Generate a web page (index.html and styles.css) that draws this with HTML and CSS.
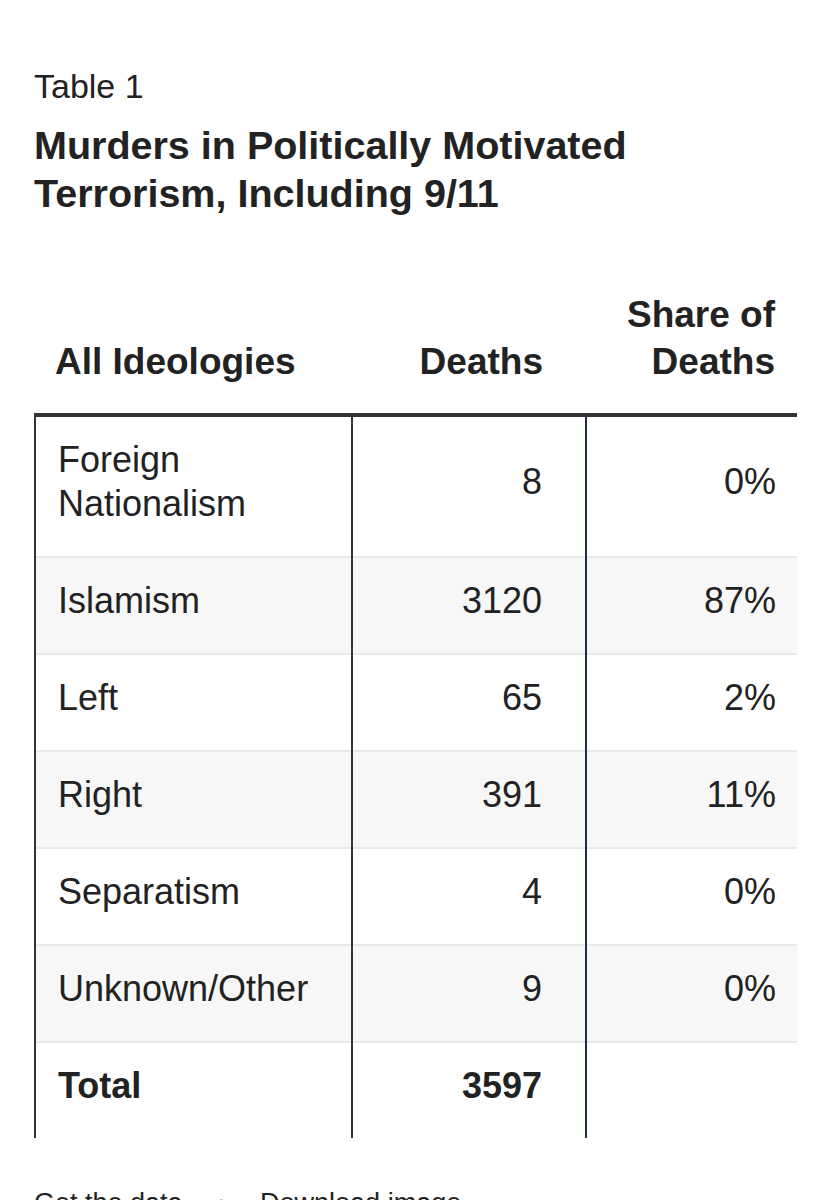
FILE: index.html
```html
<!DOCTYPE html>
<html lang="en">
<head>
<meta charset="utf-8">
<title>Table 1 — Murders in Politically Motivated Terrorism, Including 9/11</title>
<link rel="stylesheet" href="styles.css">
</head>
<body>
<div class="figure">
  <p class="label">Table 1</p>
  <h1 class="title">Murders in Politically Motivated Terrorism, Including 9/11</h1>
  <table class="data">
    <colgroup>
      <col class="col-name">
      <col class="col-deaths">
      <col class="col-share">
    </colgroup>
    <thead>
      <tr>
        <th class="c-name">All Ideologies</th>
        <th class="c-deaths">Deaths</th>
        <th class="c-share">Share of<br>Deaths</th>
      </tr>
    </thead>
    <tbody>
      <tr>
        <td class="c-name">Foreign<br>Nationalism</td>
        <td class="c-deaths">8</td>
        <td class="c-share">0%</td>
      </tr>
      <tr class="alt">
        <td class="c-name">Islamism</td>
        <td class="c-deaths">3120</td>
        <td class="c-share">87%</td>
      </tr>
      <tr>
        <td class="c-name">Left</td>
        <td class="c-deaths">65</td>
        <td class="c-share">2%</td>
      </tr>
      <tr class="alt">
        <td class="c-name">Right</td>
        <td class="c-deaths">391</td>
        <td class="c-share">11%</td>
      </tr>
      <tr>
        <td class="c-name">Separatism</td>
        <td class="c-deaths">4</td>
        <td class="c-share">0%</td>
      </tr>
      <tr class="alt">
        <td class="c-name">Unknown/Other</td>
        <td class="c-deaths">9</td>
        <td class="c-share">0%</td>
      </tr>
      <tr class="total">
        <td class="c-name">Total</td>
        <td class="c-deaths">3597</td>
        <td class="c-share"></td>
      </tr>
    </tbody>
  </table>
  <div class="footer">
    <span class="link">Get the data</span>
    <span class="sep">•</span>
    <span class="link">Download image</span>
  </div>
</div>
</body>
</html>
```
FILE: styles.css
```css
* {
  box-sizing: border-box;
}

html, body {
  margin: 0;
  padding: 0;
  background: #ffffff;
}

body {
  font-family: "Liberation Sans", Arial, sans-serif;
  color: #222222;
}

.figure {
  padding: 66px 33px 0 34px;
}

.label {
  margin: 0;
  font-size: 34px;
  line-height: 40px;
  font-weight: 400;
  color: #222222;
}

.title {
  margin: 15px 0 0 0;
  font-size: 39.5px;
  line-height: 48px;
  font-weight: 700;
  color: #222222;
}

.data {
  margin-top: 74px;
  width: 763px;
  table-layout: fixed;
  border-collapse: separate;
  border-spacing: 0;
}

.col-name { width: 319px; }
.col-deaths { width: 234px; }
.col-share { width: 210px; }

.data th {
  font-size: 37px;
  line-height: 47px;
  font-weight: 700;
  color: #222222;
  vertical-align: bottom;
  padding: 0 0 28px 0;
  border-bottom: 4px solid #333333;
}

.data th.c-name {
  text-align: left;
  padding-left: 21px;
}

.data th.c-deaths {
  text-align: right;
  padding-right: 44px;
}

.data th.c-share {
  text-align: right;
  padding-right: 22px;
}

.data td {
  font-size: 36px;
  line-height: 44px;
  font-weight: 400;
  color: #222222;
  vertical-align: middle;
  padding: 23px 0 30px 0;
  background: linear-gradient(#e8e8e8, #e8e8e8) top left / 100% 2px no-repeat;
}

.data tbody tr:first-child td {
  padding-top: 21px;
  background: none;
}

.data tr.alt td {
  background: linear-gradient(#e8e8e8, #e8e8e8) top left / 100% 2px no-repeat, #f7f7f7;
}

.data td.c-name {
  text-align: left;
  padding-left: 22px;
  border-left: 2px solid #333333;
  border-right: 2px solid #333333;
}

.data td.c-deaths {
  text-align: right;
  padding-right: 43px;
  border-right: 2px solid #1e2b4a;
}

.data td.c-share {
  text-align: right;
  padding-right: 21px;
}

.data tr.total td {
  font-weight: 700;
}

.footer {
  margin-top: 49px;
  display: flex;
  align-items: baseline;
  gap: 34px;
  font-size: 27px;
  line-height: 32px;
  color: #222222;
}

.sep {
  color: #888888;
}
```
